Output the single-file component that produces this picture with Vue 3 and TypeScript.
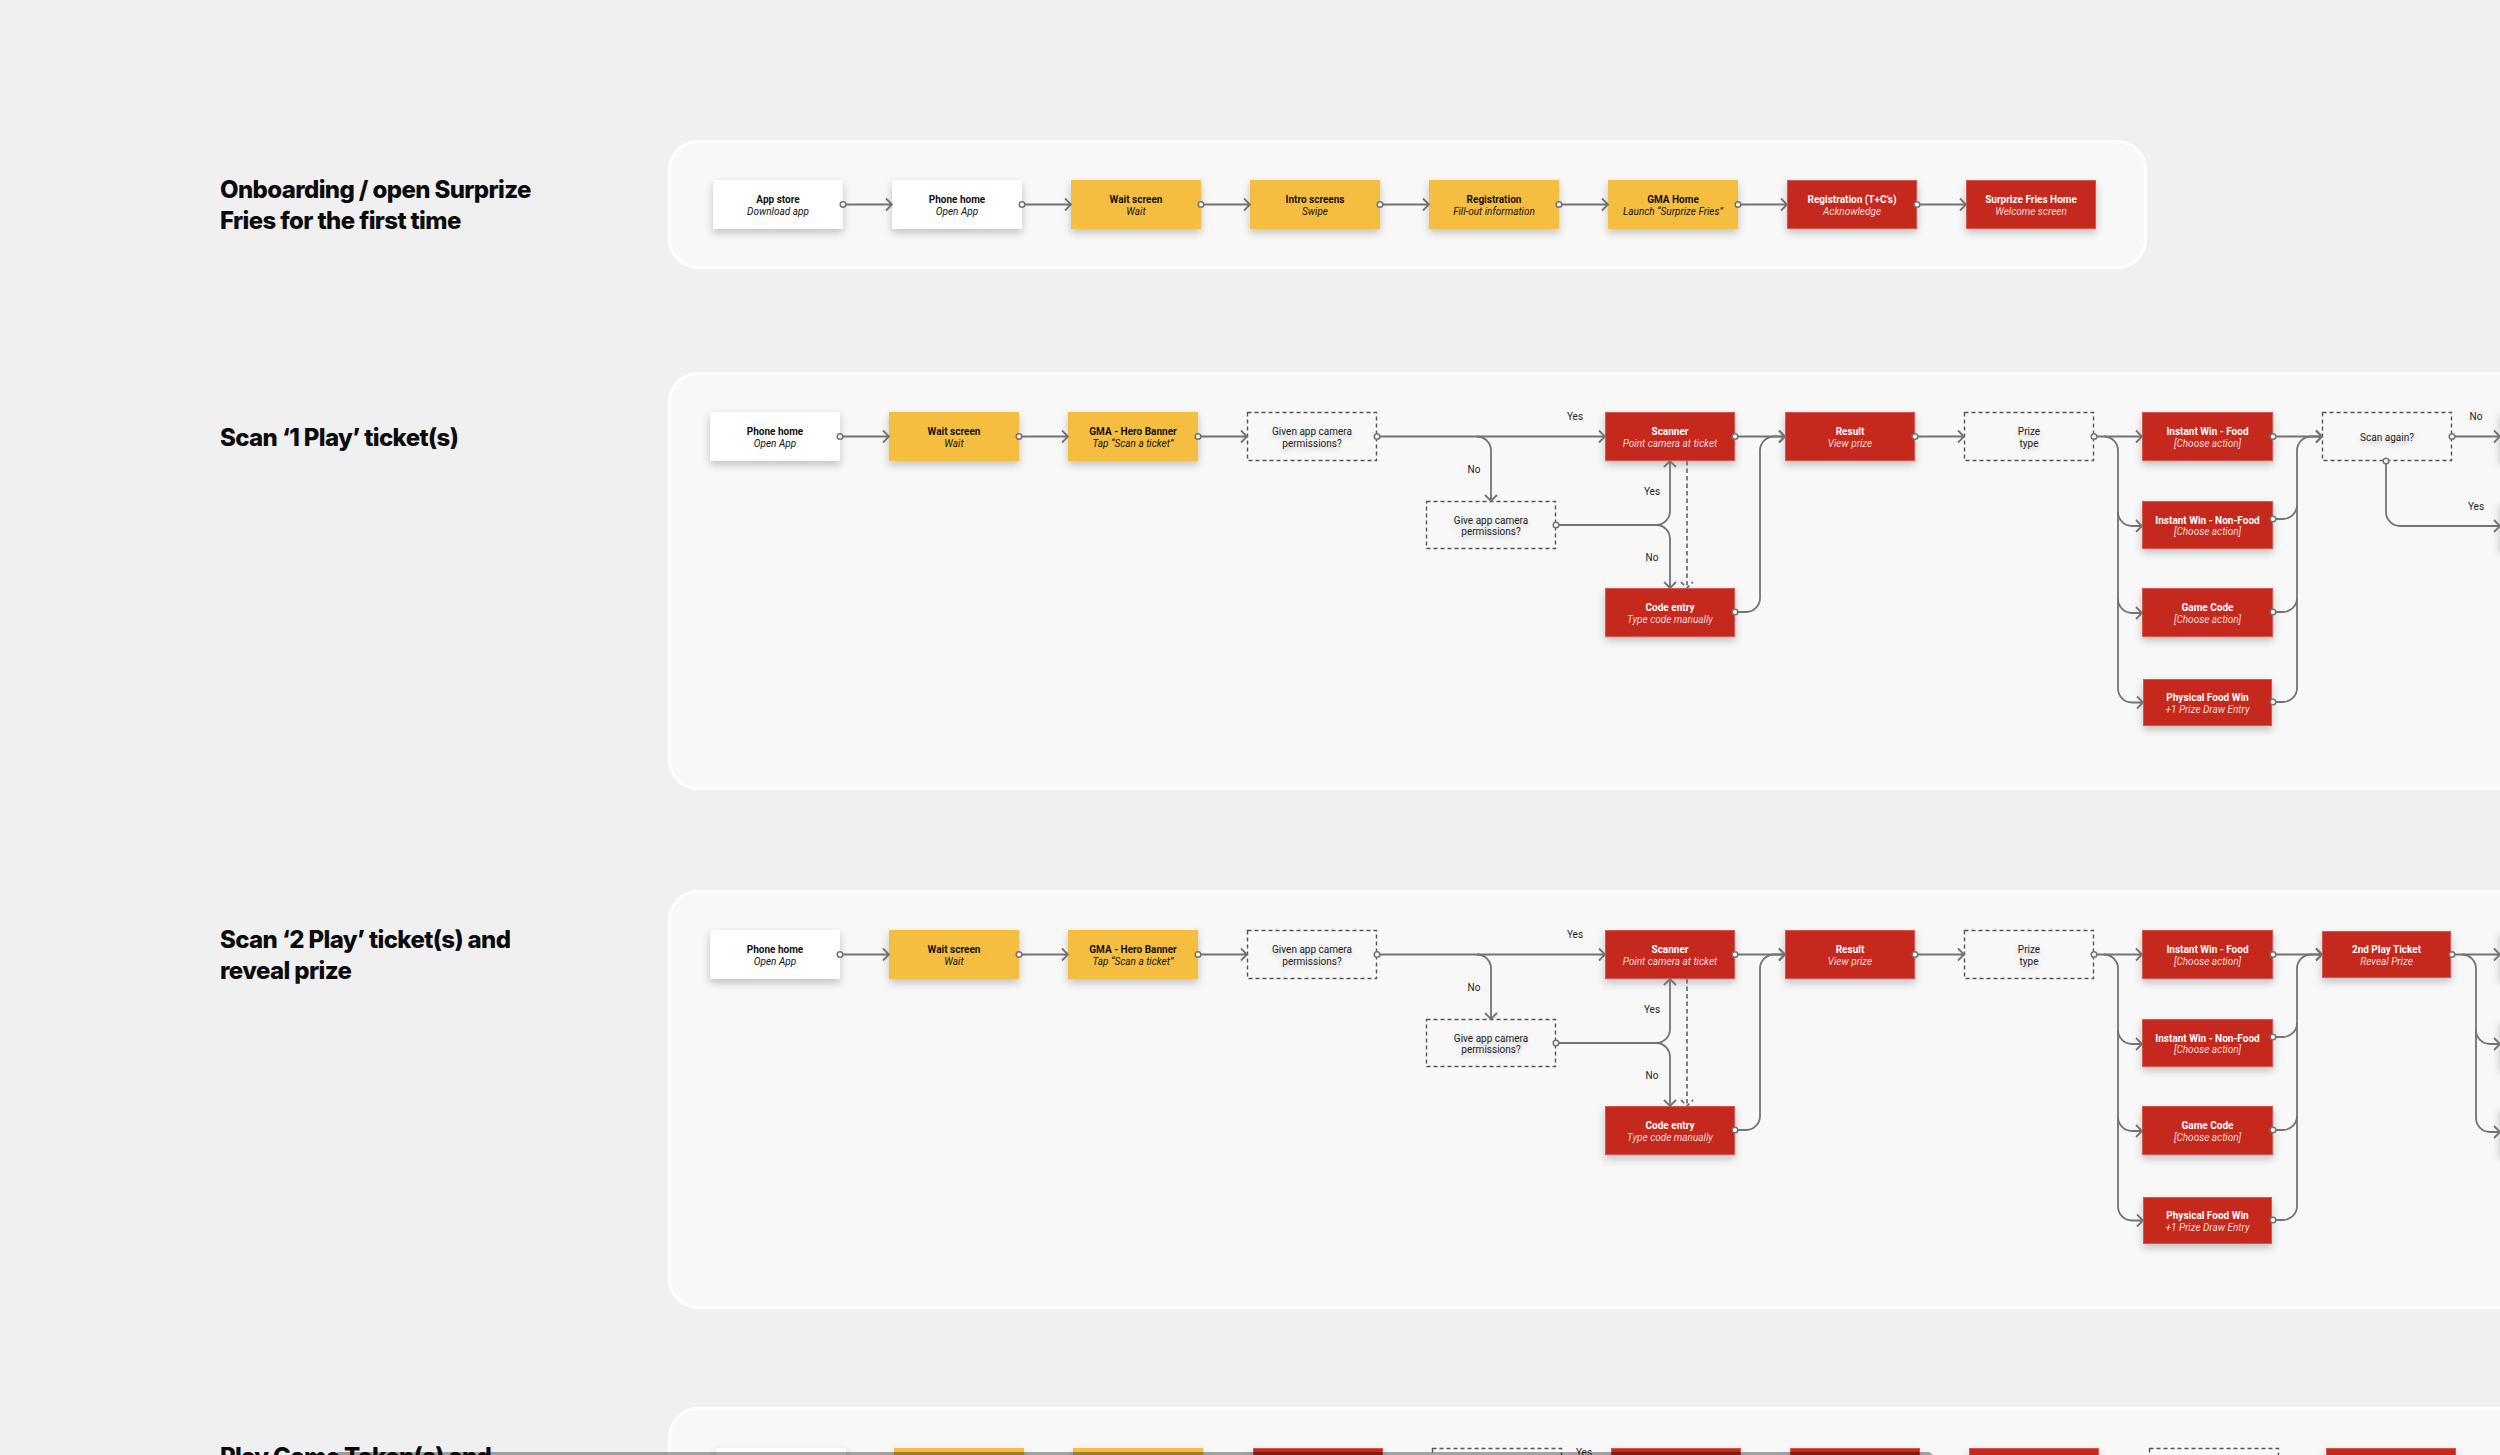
<script setup lang="ts">
type Kind = 'white' | 'yellow' | 'red' | 'dashed'
interface FlowNode { x: number; y: number; w?: number; h?: number; kind: Kind; title?: string; sub?: string }
interface Label { x: number; y: number; text: string }
interface Flow {
  name: string
  title: string
  cls: string
  nodes: FlowNode[]
  lines: string[]
  dashed: string[]
  dots: [number, number][]
  labels: Label[]
}

const R = 14
const arR = (x: number, y: number) => `M${x - 6},${y - 6}L${x},${y}L${x - 6},${y + 6}`
const arD = (x: number, y: number) => `M${x - 6},${y - 6}L${x},${y}L${x + 6},${y - 6}`
const arU = (x: number, y: number) => `M${x - 6},${y + 6}L${x},${y}L${x + 6},${y + 6}`
const hArrow = (x1: number, x2: number, y: number) => `M${x1},${y}H${x2 - 0.5}${arR(x2, y)}`
const downRight = (x: number, y: number) => `M${x},${y}A${R},${R} 0 0 0 ${x + R},${y + R}`

const Y0 = 64.5

const onboardingLabels: [string, string, Kind][] = [
  ['App store', 'Download app', 'white'],
  ['Phone home', 'Open App', 'white'],
  ['Wait screen', 'Wait', 'yellow'],
  ['Intro screens', 'Swipe', 'yellow'],
  ['Registration', 'Fill-out information', 'yellow'],
  ['GMA Home', 'Launch “Surprize Fries”', 'yellow'],
  ['Registration (T+C’s)', 'Acknowledge', 'red'],
  ['Surprize Fries Home', 'Welcome screen', 'red']
]

const onboarding: Flow = {
  name: 'onboarding',
  title: 'Onboarding / open Surprize\nFries for the first time',
  cls: 'short',
  nodes: onboardingLabels.map(([title, sub, kind], i) => ({ x: 45 + 179 * i, y: 40, kind, title, sub })),
  lines: onboardingLabels.slice(0, -1).map((_, i) => hArrow(175 + 179 * i, 224 + 179 * i, Y0)),
  dashed: [],
  dots: onboardingLabels.slice(0, -1).map((_, i): [number, number] => [175 + 179 * i, Y0]),
  labels: []
}

function scanFlow(name: string, title: string, second: boolean): Flow {
  const nodes: FlowNode[] = [
    { x: 42, y: 40, kind: 'white', title: 'Phone home', sub: 'Open App' },
    { x: 221, y: 40, kind: 'yellow', title: 'Wait screen', sub: 'Wait' },
    { x: 400, y: 40, kind: 'yellow', title: 'GMA - Hero Banner', sub: 'Tap “Scan a ticket”' },
    { x: 579, y: 40, kind: 'dashed', sub: 'Given app camera\npermissions?' },
    { x: 758, y: 129, h: 48, kind: 'dashed', sub: 'Give app camera\npermissions?' },
    { x: 937, y: 40, kind: 'red', title: 'Scanner', sub: 'Point camera at ticket' },
    { x: 937, y: 216, kind: 'red', title: 'Code entry', sub: 'Type code manually' },
    { x: 1117, y: 40, kind: 'red', title: 'Result', sub: 'View prize' },
    { x: 1296, y: 40, kind: 'dashed', sub: 'Prize\ntype' },
    { x: 1474, y: 40, w: 131, kind: 'red', title: 'Instant Win - Food', sub: '[Choose action]' },
    { x: 1474, y: 129, w: 131, h: 48, kind: 'red', title: 'Instant Win - Non-Food', sub: '[Choose action]' },
    { x: 1474, y: 216, w: 131, kind: 'red', title: 'Game Code', sub: '[Choose action]' },
    { x: 1475, y: 307, w: 129, h: 47, kind: 'red', title: 'Physical Food Win', sub: '+1 Prize Draw Entry' }
  ]
  const lines: string[] = [
    hArrow(172, 221, Y0),
    hArrow(351, 400, Y0),
    hArrow(530, 579, Y0),
    hArrow(709, 937, Y0),
    `M809,${Y0}A${R},${R} 0 0 1 823,${Y0 + R}V129${arD(823, 129)}`,
    `M888,153H989A${R},${R} 0 0 0 1002,140V89${arU(1002, 89)}`,
    `M989,153A${R},${R} 0 0 1 1002,166V216${arD(1002, 216)}`,
    hArrow(1067, 1117, Y0),
    `M1067,240H1078A${R},${R} 0 0 0 1092,226V${Y0 + R}A${R},${R} 0 0 1 1106,${Y0}H1116${arR(1117, Y0)}`,
    hArrow(1247, 1296, Y0),
    hArrow(1426, 1474, Y0),
    `M1436,${Y0}A${R},${R} 0 0 1 1450,${Y0 + R}V316.5A${R},${R} 0 0 0 1464,330.5H1475${arR(1475, 330.5)}`,
    `${downRight(1450, 140)}H1474${arR(1474, 154)}`,
    `${downRight(1450, 227)}H1474${arR(1474, 241)}`,
    hArrow(1605, 1654, Y0),
    `M1604,330H1615A${R},${R} 0 0 0 1629,316V${Y0 + R}A${R},${R} 0 0 1 1643,${Y0}H1653${arR(1654, Y0)}`,
    `M1605,147H1615A${R},${R} 0 0 0 1629,133`,
    `M1605,240H1615A${R},${R} 0 0 0 1629,226`,
    hArrow(1784, 1832, Y0)
  ]
  const dots: [number, number][] = [
    [172, Y0], [351, Y0], [530, Y0], [709, Y0], [888, 153], [1067, Y0], [1067, 240], [1247, Y0],
    [1426, Y0], [1605, Y0], [1605, 147], [1605, 240], [1605, 330], [1784, Y0]
  ]
  const labels: Label[] = [
    { x: 907, y: 45, text: 'Yes' },
    { x: 806, y: 98, text: 'No' },
    { x: 984, y: 120, text: 'Yes' },
    { x: 984, y: 186, text: 'No' }
  ]
  if (second) {
    nodes.push({ x: 1654, y: 41, w: 129, h: 47, kind: 'red', title: '2nd Play Ticket', sub: 'Reveal Prize' })
    nodes.push({ x: 1832, y: 40, kind: 'red' }, { x: 1832, y: 129, kind: 'red' }, { x: 1832, y: 216, kind: 'red' })
    lines.push(
      `M1794,${Y0}A${R},${R} 0 0 1 1808,${Y0 + R}V228A${R},${R} 0 0 0 1822,242H1832${arR(1832, 242)}`,
      `${downRight(1808, 140)}H1832${arR(1832, 154)}`
    )
  } else {
    nodes.push({ x: 1654, y: 40, kind: 'dashed', sub: 'Scan again?' })
    nodes.push({ x: 1832, y: 40, kind: 'red' }, { x: 1832, y: 129, kind: 'red' })
    lines.push(`M1718,89V140A${R},${R} 0 0 0 1732,154H1832${arR(1832, 154)}`)
    dots.push([1718, 89])
    labels.push({ x: 1808, y: 45, text: 'No' }, { x: 1808, y: 135, text: 'Yes' })
  }
  return { name, title, cls: second ? 'tall second' : 'tall', nodes, lines, dashed: [`M1019,89V215.5${arD(1019, 216)}`], dots, labels }
}

const tokenKinds: [number, Kind][] = [
  [48, 'white'], [226, 'yellow'], [405, 'yellow'], [585, 'red'], [764, 'dashed'],
  [943, 'red'], [1122, 'red'], [1301, 'red'], [1481, 'dashed'], [1658, 'red']
]

const tokens: Flow = {
  name: 'tokens',
  title: 'Play Game Token(s) and\n\u00a0',
  cls: 'last',
  nodes: tokenKinds.map(([x, kind]) => ({ x, y: 41, kind })),
  lines: [],
  dashed: [],
  dots: [],
  labels: [{ x: 916, y: 46, text: 'Yes' }]
}

const flows: Flow[] = [
  onboarding,
  scanFlow('scan-one', 'Scan ‘1 Play’ ticket(s)', false),
  scanFlow('scan-two', 'Scan ‘2 Play’ ticket(s) and\nreveal prize', true),
  tokens
]

function place(n: FlowNode) {
  return { left: `${n.x}px`, top: `${n.y}px`, width: `${n.w ?? 130}px`, height: `${n.h ?? 49}px` }
}

function dashedBoxes(flow: Flow) {
  return flow.nodes.filter((n) => n.kind === 'dashed')
}
</script>

<template>
  <main class="page">
    <section v-for="flow in flows" :key="flow.name" class="row" :class="flow.cls">
      <div class="heading">
        <h2 class="title">{{ flow.title }}</h2>
      </div>
      <div class="panel">
        <div
          v-for="(n, i) in flow.nodes"
          :key="i"
          class="node"
          :class="n.kind"
          :style="place(n)"
        >
          <strong v-if="n.title">{{ n.title }}</strong>
          <span v-if="n.sub" class="sub">{{ n.sub }}</span>
        </div>
        <svg class="wires" xmlns="http://www.w3.org/2000/svg">
          <rect
            v-for="(n, i) in dashedBoxes(flow)"
            :key="'r' + i"
            class="box"
            :x="n.x + 0.5"
            :y="n.y + 0.5"
            :width="(n.w ?? 130) - 1"
            :height="(n.h ?? 49) - 1"
          />
          <path v-for="(d, i) in flow.lines" :key="'l' + i" class="wire" :d="d" />
          <path v-for="(d, i) in flow.dashed" :key="'d' + i" class="wire dash" :d="d" />
          <circle v-for="(c, i) in flow.dots" :key="'c' + i" class="dot" :cx="c[0]" :cy="c[1]" r="2.8" />
        </svg>
        <span
          v-for="(l, i) in flow.labels"
          :key="'t' + i"
          class="label"
          :style="{ left: `${l.x}px`, top: `${l.y}px` }"
        >{{ l.text }}</span>
      </div>
    </section>
    <div class="edge-bar"></div>
  </main>
</template>

<style scoped>
.page {
  position: relative;
  width: 2500px;
  height: 1455px;
  box-sizing: border-box;
  padding-top: 140px;
  overflow: hidden;
  background: #f0f0f0;
  font-family: Roboto, "Liberation Sans", sans-serif;
}

.row {
  display: flex;
  padding-left: 220px;
}

.row.short { margin-bottom: 103px; }
.row.tall { margin-bottom: 100px; }
.row.tall.second { margin-bottom: 98px; }

.heading {
  flex: none;
  box-sizing: border-box;
  width: 448px;
  height: 129px;
  padding-top: 1px;
  display: flex;
  align-items: center;
}

.title {
  margin: 0;
  font-family: Inter, "Liberation Sans", sans-serif;
  font-size: 24px;
  font-weight: 800;
  line-height: 31px;
  letter-spacing: -0.62px;
  color: #0b0b0b;
  white-space: pre-line;
}

.panel {
  position: relative;
  flex: none;
  width: 2000px;
  height: 418px;
  border-radius: 30px;
  background: #f8f8f8;
  box-shadow: inset 0 0 0 3px #fff;
}

.short .panel {
  width: 1479px;
  height: 129px;
}

.second .panel { height: 419px; }

.node {
  position: absolute;
  box-sizing: border-box;
  display: flex;
  flex-direction: column;
  align-items: center;
  justify-content: center;
  padding-top: 2px;
  font-size: 10px;
  line-height: 11.3px;
  text-align: center;
  color: #111;
  box-shadow: 0 4px 8px rgba(0, 0, 0, 0.22);
}

.node strong { font-weight: 700; white-space: nowrap; }

.sub {
  font-style: italic;
  white-space: pre-line;
}

.white { background: #fff; }
.yellow { background: #f5be41; }

.red {
  background: #c5281c;
  border: 1px solid #d4584e;
  color: #fff;
}

.red .sub { color: rgba(255, 255, 255, 0.85); }

.dashed {
  background: transparent;
  box-shadow: none;
  color: #222;
  text-shadow: 0 3px 5px rgba(0, 0, 0, 0.22);
}

.dashed .sub { font-style: normal; }

.wires {
  position: absolute;
  inset: 0;
  width: 100%;
  height: 100%;
  overflow: visible;
  pointer-events: none;
}

.box {
  fill: none;
  stroke: #555;
  stroke-width: 1.4;
  stroke-dasharray: 4 3;
}

.wire {
  fill: none;
  stroke: #737373;
  stroke-width: 1.8;
}

.wire.dash { stroke-dasharray: 4.5 3; }

.dot {
  fill: #f8f8f8;
  stroke: #737373;
  stroke-width: 1.5;
}

.label {
  position: absolute;
  transform: translate(-50%, -50%);
  font-size: 10px;
  line-height: 12px;
  color: #222;
}

.edge-bar {
  position: absolute;
  left: 337px;
  top: 1452px;
  width: 1596px;
  height: 3px;
  background: rgba(0, 0, 0, 0.34);
  clip-path: polygon(0 0, 99.8% 0, 100% 100%, 0 100%);
}
</style>

<style>
html, body {
  margin: 0;
  overflow: hidden;
  background: #f0f0f0;
}
</style>
